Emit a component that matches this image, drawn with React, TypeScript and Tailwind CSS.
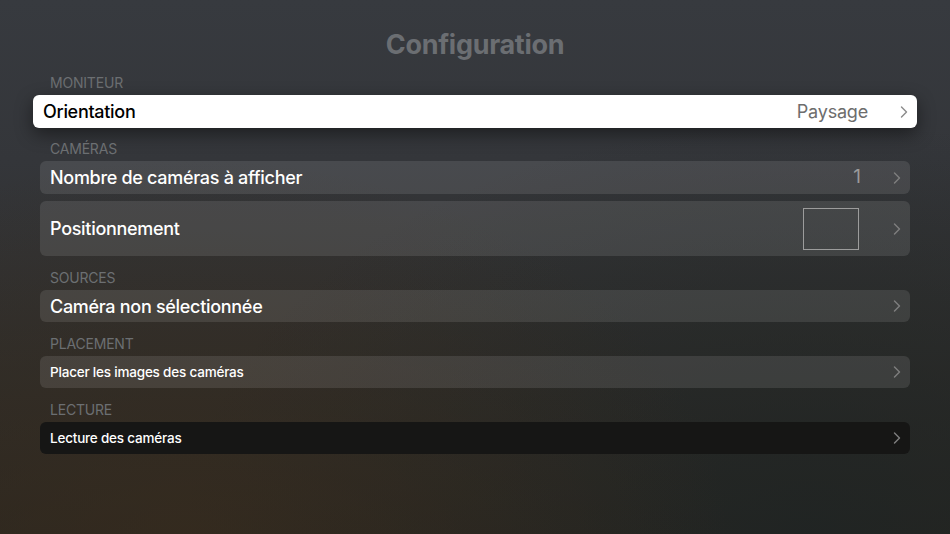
import { ChevronRight } from 'lucide-react';

type Row = {
  label: string;
  value?: string;
  box?: boolean;
  tall?: boolean;
  small?: boolean;
  dark?: boolean;
  focused?: boolean;
};

const sections: { title: string; rows: Row[] }[] = [
  { title: 'MONITEUR', rows: [{ label: 'Orientation', value: 'Paysage', focused: true }] },
  {
    title: 'CAMÉRAS',
    rows: [
      { label: 'Nombre de caméras à afficher', value: '1' },
      { label: 'Positionnement', box: true, tall: true },
    ],
  },
  { title: 'SOURCES', rows: [{ label: 'Caméra non sélectionnée' }] },
  { title: 'PLACEMENT', rows: [{ label: 'Placer les images des caméras', small: true }] },
  { title: 'LECTURE', rows: [{ label: 'Lecture des caméras', small: true, dark: true }] },
];

function SettingRow({ row, compact }: { row: Row; compact?: boolean }) {
  if (row.focused) {
    return (
      <div className="-mx-[7px] flex h-[33px] items-center rounded-[6px] bg-white pl-[10px] pr-[3px] shadow-[0_6px_18px_rgba(0,0,0,0.45)]">
        <span className="flex-1 text-[18px] font-medium tracking-[-0.3px] text-black">{row.label}</span>
        <span className="mr-[26px] text-[18px] tracking-[-0.2px] text-[#6d6d6d]">{row.value}</span>
        <ChevronRight className="h-[20px] w-[20px] text-[#8c8c8c]" strokeWidth={1.7} />
      </div>
    );
  }
  return (
    <div
      className={`flex items-center rounded-[6px] pl-[10px] pr-[3px] ${
        row.tall ? 'h-[55px]' : compact ? 'h-[32px]' : 'h-[33px]'
      } ${row.dark ? 'bg-[#161615]' : 'bg-white/10'}`}
    >
      <span
        className={`flex-1 text-white ${
          row.small ? 'text-[13.5px] font-medium tracking-[-0.2px]' : 'text-[18px] font-medium tracking-[-0.3px]'
        }`}
      >
        {row.label}
      </span>
      {row.value && <span className="mr-[26px] text-[19px] text-[#9a9a9a]">{row.value}</span>}
      {row.box && <div className="mr-[28px] h-[42px] w-[56px] border border-[#9c9c9c]" />}
      <ChevronRight className="h-[20px] w-[20px] text-[#7e7e7e]" strokeWidth={1.7} />
    </div>
  );
}

export default function App() {
  return (
    <div
      className="relative h-[534px] w-[950px] overflow-hidden bg-[linear-gradient(180deg,#373a3f_0%,#34363a_30%,#2f2e2c_65%,#2a2620_100%)]"
      style={{ fontFamily: 'Inter, "Noto Sans", sans-serif' }}
    >
      <div className="pointer-events-none absolute inset-0 bg-[radial-gradient(ellipse_at_85%_100%,rgba(30,36,36,0.8),transparent_55%)]" />
      <div className="pointer-events-none absolute inset-0 bg-[radial-gradient(ellipse_at_20%_100%,rgba(56,44,30,0.7),transparent_50%)]" />
      <div className="relative px-[40px] pt-[28px]">
        <h1 className="h-[34px] text-center text-[27px] leading-[34px] font-bold tracking-[-0.3px] text-[#6b6e72]">
          Configuration
        </h1>
        <div className="mt-[13px] flex flex-col gap-[13px]">
          {sections.map((s, i) => (
            <div key={s.title} className={i >= 2 ? 'mt-[1px]' : ''}>
              <div className="mb-[4px] h-[16px] pl-[10px] text-[14px] leading-[16px] tracking-[-0.2px] text-[#6c6f72]">
                {s.title}
              </div>
              <div className="flex flex-col gap-[7px]">
                {s.rows.map((r) => (
                  <SettingRow key={r.label} row={r} compact={i >= 2} />
                ))}
              </div>
            </div>
          ))}
        </div>
      </div>
    </div>
  );
}
